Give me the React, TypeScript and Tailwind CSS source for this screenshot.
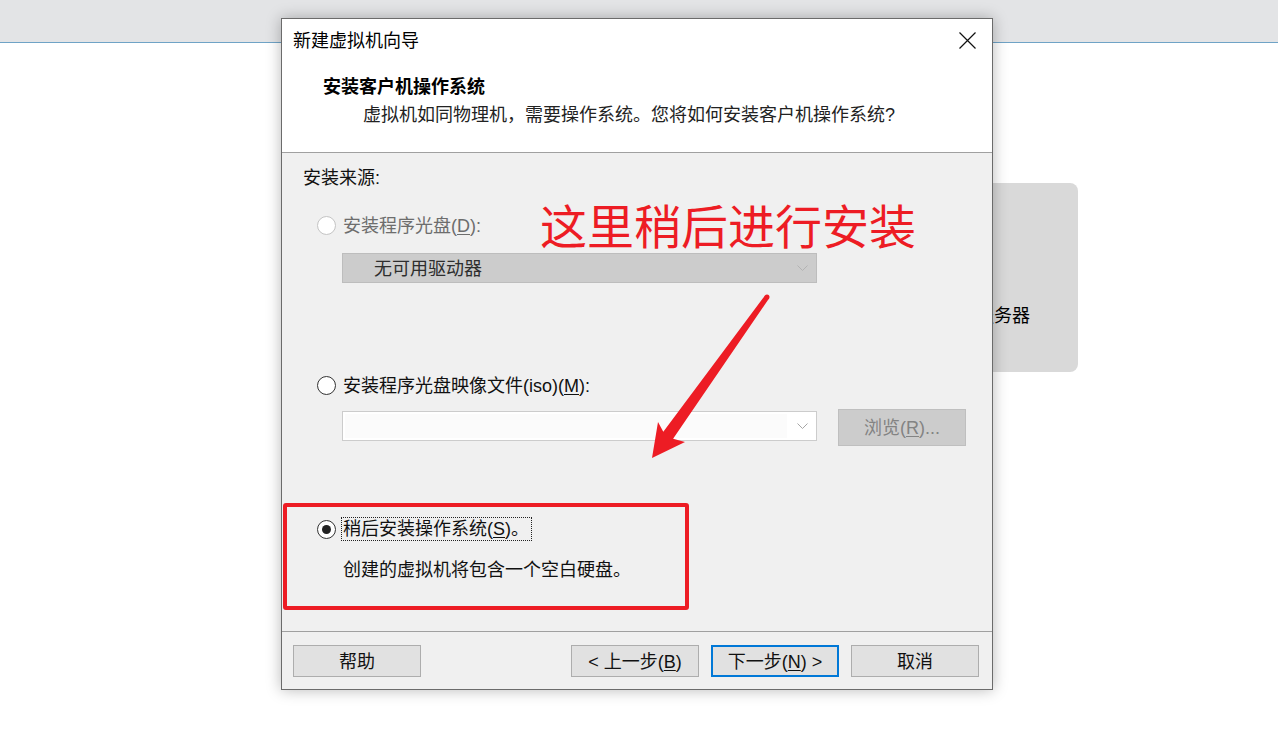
import React from 'react'

const UI_FONT = "font-['Liberation_Sans','Noto_Sans_CJK_SC',sans-serif]"

function Chevron({ color = '#a6a6a6' }: { color?: string }) {
  return (
    <svg width="11" height="6" viewBox="0 0 11 6" aria-hidden="true">
      <path d="M0.5 0.5 L5.5 5.5 L10.5 0.5" fill="none" stroke={color} strokeWidth="1" />
    </svg>
  )
}

function Radio({ checked = false, disabled = false }: { checked?: boolean; disabled?: boolean }) {
  return (
    <span
      className={`flex h-[19px] w-[19px] shrink-0 items-center justify-center rounded-full border bg-white ${
        disabled ? 'border-[#c4c4c4]' : 'border-[#333333]'
      }`}
    >
      {checked ? <span className="h-[9px] w-[9px] rounded-full bg-[#222222]" /> : null}
    </span>
  )
}

function Btn({ children, primary = false }: { children: React.ReactNode; primary?: boolean }) {
  return (
    <div
      className={`flex h-[32px] w-[128px] items-center justify-center bg-[#e1e1e1] pt-[2px] text-[18px] leading-none text-[#111] ${
        primary ? 'border-2 border-[#0078d7]' : 'border border-[#adadad]'
      }`}
    >
      {children}
    </div>
  )
}

export default function App() {
  return (
    <div className={`relative h-[751px] w-full overflow-hidden bg-white ${UI_FONT}`}>
      {/* app toolbar strip */}
      <div className="h-[43px] border-b border-[#6fa3c6] bg-[#e3e4e6]" />

      {/* home tiles behind the wizard */}
      <div className="flex justify-end pr-[200px] pt-[140px]">
        <div className="flex h-[189px] w-[222px] flex-col items-center justify-end rounded-[8px] bg-[#d9d9d9] pb-[44px]">
          <span className="text-[18px] leading-[24px] text-black">连接远程服务器</span>
        </div>
      </div>

      {/* wizard window */}
      <div className="absolute left-[281px] top-[18px] flex h-[672px] w-[712px] flex-col border border-[#6b6b6b] shadow-[0_0_14px_rgba(0,0,0,0.28)]">
        <div className="h-[134px] border-b border-[#a0a0a0] bg-white">
          <div className="relative flex h-[44px] items-center pl-[11px] text-[18px] text-black">
            新建虚拟机向导
            <svg
              className="absolute right-[16px] top-[13px]"
              width="17"
              height="17"
              viewBox="0 0 17 17"
              aria-hidden="true"
            >
              <path d="M0.5 0.5 L16.5 16.5 M16.5 0.5 L0.5 16.5" stroke="#111" strokeWidth="1.2" />
            </svg>
          </div>
          <div className="mt-[10px] pl-[41px] text-[18px] font-bold leading-[28px] text-black">安装客户机操作系统</div>
          <div className="pl-[81px] text-[18px] leading-[28px] text-[#222]">
            虚拟机如同物理机，需要操作系统。您将如何安装客户机操作系统?
          </div>
        </div>

        <div className="flex-1 bg-[#f0f0f0] pt-[13px] text-[18px] leading-[24px]">
          <div className="pl-[21px] text-[#111]">安装来源:</div>

          <div className="mt-[23px] flex items-center pl-[35px]">
            <Radio disabled />
            <span className="ml-[7px] pt-[1px] text-[#6d6d6d]">
              安装程序光盘(<span className="underline underline-offset-2">D</span>):
            </span>
          </div>
          <div className="ml-[60px] mt-[15px] flex h-[30px] w-[475px] items-center justify-between border border-[#bdbdbd] bg-[#cccccc] pl-[31px] pr-[8px]">
            <span className="pt-[1px] text-[#2e2e2e]">无可用驱动器</span>
            <Chevron color="#b3b3b3" />
          </div>

          <div className="mt-[90px] flex items-center pl-[35px]">
            <Radio />
            <span className="ml-[7px] pt-[1px] text-[#111]">
              安装程序光盘映像文件(iso)(<span className="underline underline-offset-2">M</span>):
            </span>
          </div>
          <div className="ml-[60px] mt-[11px] flex items-start gap-[21px]">
            <div className="mt-[2px] flex h-[30px] w-[475px] items-center justify-between border border-[#cccccc] bg-white p-[2px] pr-[8px]">
              <div className="h-full w-[442px] bg-[#fbfbfb]" />
              <Chevron />
            </div>
            <div className="flex h-[37px] w-[128px] items-center justify-center border border-[#bfbfbf] bg-[#cccccc] pt-[1px] text-[#838383]">
              浏览(<span className="underline underline-offset-2">R</span>)...
            </div>
          </div>

          <div className="mt-[71px] flex items-center pl-[35px]">
            <Radio checked />
            <span className="ml-[5px] border border-dotted border-[#222] pl-[1px] pr-[2px] pt-[1px] leading-[21px] text-[#111]">
              稍后安装操作系统(<span className="underline underline-offset-2">S</span>)。
            </span>
          </div>
          <div className="mt-[17px] pl-[61px] text-[#111]">创建的虚拟机将包含一个空白硬盘。</div>
        </div>

        <div className="flex h-[58px] items-start border-t border-[#a0a0a0] bg-[#f0f0f0] pl-[11px] pr-[13px] pt-[13px]">
          <Btn>帮助</Btn>
          <div className="ml-auto flex gap-[12px]">
            <Btn>
              &lt; 上一步(<span className="underline underline-offset-2">B</span>)
            </Btn>
            <Btn primary>
              下一步(<span className="underline underline-offset-2">N</span>) &gt;
            </Btn>
            <Btn>取消</Btn>
          </div>
        </div>
      </div>

      {/* red annotation */}
      <div className="absolute left-[540px] top-[199px] font-['Noto_Sans_CJK_SC',sans-serif] text-[47px] leading-[50px] text-[#ed1c24]">
        这里稍后进行安装
      </div>
      <div className="absolute left-[283px] top-[503px] h-[107px] w-[406px] rounded-[3px] border-[4px] border-[#ed1c24]" />
      <svg className="pointer-events-none absolute left-0 top-0" width="1278" height="751" aria-hidden="true">
        <polygon
          points="769,298.5 673.1,438.7 685,442 652,458 658,422 663.3,431.7 765,295.5"
          fill="#ed1c24"
        />
        <circle cx="767" cy="297" r="2.5" fill="#ed1c24" />
      </svg>
    </div>
  )
}
